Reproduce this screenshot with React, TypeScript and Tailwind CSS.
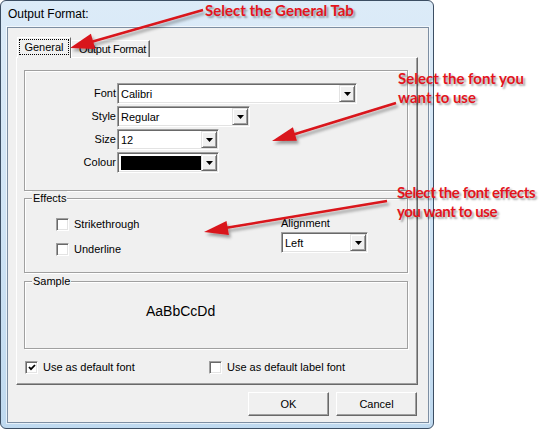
import React from 'react';

function DropButton() {
  return (
    <div className="flex h-[17px] w-[16px] shrink-0 items-center justify-center border border-t-[#e3e3e3] border-l-[#e3e3e3] border-r-[#696969] border-b-[#696969] bg-[#f0f0f0] shadow-[inset_1px_1px_0_#fff,inset_-1px_-1px_0_#a0a0a0]">
      <svg width="7" height="4" viewBox="0 0 7 4">
        <polygon points="0,0 7,0 3.5,4" fill="#000" />
      </svg>
    </div>
  );
}

function Combo({ className, children }: { className: string; children?: React.ReactNode }) {
  return (
    <div
      className={`flex h-[21px] border border-t-[#a0a0a0] border-l-[#a0a0a0] border-r-white border-b-white bg-white p-[1px] shadow-[inset_1px_1px_0_#696969,inset_-1px_-1px_0_#e3e3e3] ${className}`}
    >
      <div className="flex flex-1 items-center overflow-hidden pl-[2px] pt-[1px] leading-[15px]">{children}</div>
      <DropButton />
    </div>
  );
}

function Check({ checked }: { checked?: boolean }) {
  return (
    <div className="flex h-[13px] w-[13px] shrink-0 items-center justify-center border border-t-[#a0a0a0] border-l-[#a0a0a0] border-r-white border-b-white bg-white shadow-[inset_1px_1px_0_#696969,inset_-1px_-1px_0_#e3e3e3]">
      {checked && (
        <svg width="8" height="7" viewBox="0 0 8 7">
          <path d="M1 3 L3 5.2 L7 1" fill="none" stroke="#000" strokeWidth="1.8" />
        </svg>
      )}
    </div>
  );
}

function Group({ label, className, children }: { label?: string; className: string; children?: React.ReactNode }) {
  return (
    <div className={`relative border border-[#a0a0a0] shadow-[1px_1px_0_#fff,inset_1px_1px_0_#fff] ${className}`}>
      {label && (
        <span className="absolute -top-[8px] left-[7px] bg-[#f0f0f0] px-[1px] leading-[14px]">{label}</span>
      )}
      {children}
    </div>
  );
}

function FontRow({ label, children }: { label: string; children: React.ReactNode }) {
  return (
    <div className="flex items-center">
      <span className="w-[91px] text-right">{label}</span>
      <div className="ml-[1px]">{children}</div>
    </div>
  );
}

const note =
  "absolute whitespace-nowrap font-['Lato',sans-serif] text-[15px] font-bold leading-[19px] text-[#e3141c] [text-shadow:2px_2px_2px_rgba(0,0,0,0.35)]";

export default function App() {
  return (
    <div className="relative flex h-[430px] w-[542px] overflow-hidden bg-white font-['Liberation_Sans',Arial,sans-serif] text-[11px] leading-[13px] text-black">
      {/* Window frame */}
      <div className="flex h-[429px] w-[434px] flex-col rounded-[6px] border border-[#3c4e63] bg-gradient-to-b from-[#dcebf8] via-[#d0e4f5] to-[#bfd9ef] pb-[5px] pl-[6px] pr-[4px]">
        <div className="flex h-[25px] items-center pl-[1px] text-[12px] leading-[14px]">Output Format:</div>

        {/* Client area */}
        <div className="mt-[1px] flex flex-1 flex-col border border-[#7d8ea2] bg-[#f0f0f0] pt-[9px] shadow-[0_0_0_1px_rgba(255,255,255,0.6)]">
          {/* Tabs */}
          <div className="flex h-[20px] items-end pl-[9px]">
            <div className="relative z-10 -mb-px h-[21px] w-[54px] border-l border-t border-r border-l-white border-t-white border-r-[#696969] bg-[#f0f0f0] pl-[1px] pt-[1px]">
              <div className="flex h-[16px] w-[50px] items-center justify-center border border-dotted border-black">
                General
              </div>
            </div>
            <div className="flex h-[17px] w-[79px] items-center whitespace-nowrap border-l border-t border-r border-l-white border-t-white border-r-[#696969] pl-[7px] tracking-[-0.3px] shadow-[inset_-1px_0_0_#a0a0a0]">
              Output Format
            </div>
          </div>

          {/* Tab page */}
          <div className="ml-[8px] mr-[10px] flex h-[328px] flex-col border border-t-white border-l-white border-r-[#696969] border-b-[#696969] shadow-[inset_-1px_-1px_0_#a0a0a0]">
            <Group className="ml-[7px] mt-[12px] h-[121px] w-[384px] pt-[12px]">
              <div className="flex flex-col gap-[2px]">
                <FontRow label="Font">
                  <Combo className="w-[240px]">Calibri</Combo>
                </FontRow>
                <FontRow label="Style">
                  <Combo className="w-[133px]">Regular</Combo>
                </FontRow>
                <FontRow label="Size">
                  <Combo className="w-[102px]">12</Combo>
                </FontRow>
                <FontRow label="Colour">
                  <Combo className="w-[102px]">
                    <div className="h-[14px] w-full bg-black" />
                  </Combo>
                </FontRow>
              </div>
            </Group>

            <Group label="Effects" className="ml-[7px] mt-[7px] flex h-[75px] w-[384px] pl-[31px] pt-[19px]">
              <div className="flex w-[225px] flex-col gap-[12px]">
                <div className="flex items-center gap-[5px]">
                  <Check />
                  <span>Strikethrough</span>
                </div>
                <div className="flex items-center gap-[5px]">
                  <Check />
                  <span>Underline</span>
                </div>
              </div>
              <div className="-mt-[1px] flex flex-col">
                <span className="mb-[2px]">Alignment</span>
                <Combo className="w-[87px]">Left</Combo>
              </div>
            </Group>

            <Group label="Sample" className="ml-[7px] mt-[8px] h-[68px] w-[384px] pl-[121px] pt-[20px]">
              <span className="text-[14px] leading-[18px]">AaBbCcDd</span>
            </Group>

            <div className="ml-[8px] mt-[12px] flex">
              <div className="flex w-[184px] items-center gap-[5px]">
                <Check checked />
                <span>Use as default font</span>
              </div>
              <div className="flex items-center gap-[5px]">
                <Check />
                <span>Use as default label font</span>
              </div>
            </div>
          </div>

          {/* Buttons */}
          <div className="mt-[7px] flex justify-end gap-[7px] pr-[11px]">
            <button className="h-[24px] w-[81px] border border-t-white border-l-white border-r-[#696969] border-b-[#696969] bg-[#f0f0f0] shadow-[inset_-1px_-1px_0_#a0a0a0]">
              OK
            </button>
            <button className="h-[24px] w-[81px] border border-t-white border-l-white border-r-[#696969] border-b-[#696969] bg-[#f0f0f0] shadow-[inset_-1px_-1px_0_#a0a0a0]">
              Cancel
            </button>
          </div>
        </div>
      </div>

      {/* Annotation arrows */}
      <svg className="pointer-events-none absolute left-0 top-0" width="542" height="430">
        <defs>
          <filter id="sh" x="-20%" y="-50%" width="140%" height="200%">
            <feDropShadow dx="2" dy="3" stdDeviation="1.5" floodColor="#000" floodOpacity="0.35" />
          </filter>
        </defs>
        <g filter="url(#sh)" fill="#d9141b" stroke="#d9141b">
          <line x1="203" y1="10" x2="91" y2="42" strokeWidth="2.5" />
          <polygon points="70,48 95.3,49.1 90.9,33.7" stroke="none" />
          <line x1="396" y1="103" x2="292" y2="135" strokeWidth="2.5" />
          <polygon points="272,141 296.9,140.7 292.9,127.3" stroke="none" />
          <line x1="387" y1="201" x2="225" y2="228" strokeWidth="2.5" />
          <polygon points="204,232 228.9,234.9 226.5,221.1" stroke="none" />
        </g>
      </svg>

      <div className={`${note} left-[205px] top-[1px]`}>Select the General Tab</div>
      <div className={`${note} left-[398px] top-[69px]`}>
        Select the font you
        <br />
        want to use
      </div>
      <div className={`${note} left-[397px] top-[183px] tracking-[-0.4px]`}>
        Select the font effects
        <br />
        you want to use
      </div>
    </div>
  );
}
